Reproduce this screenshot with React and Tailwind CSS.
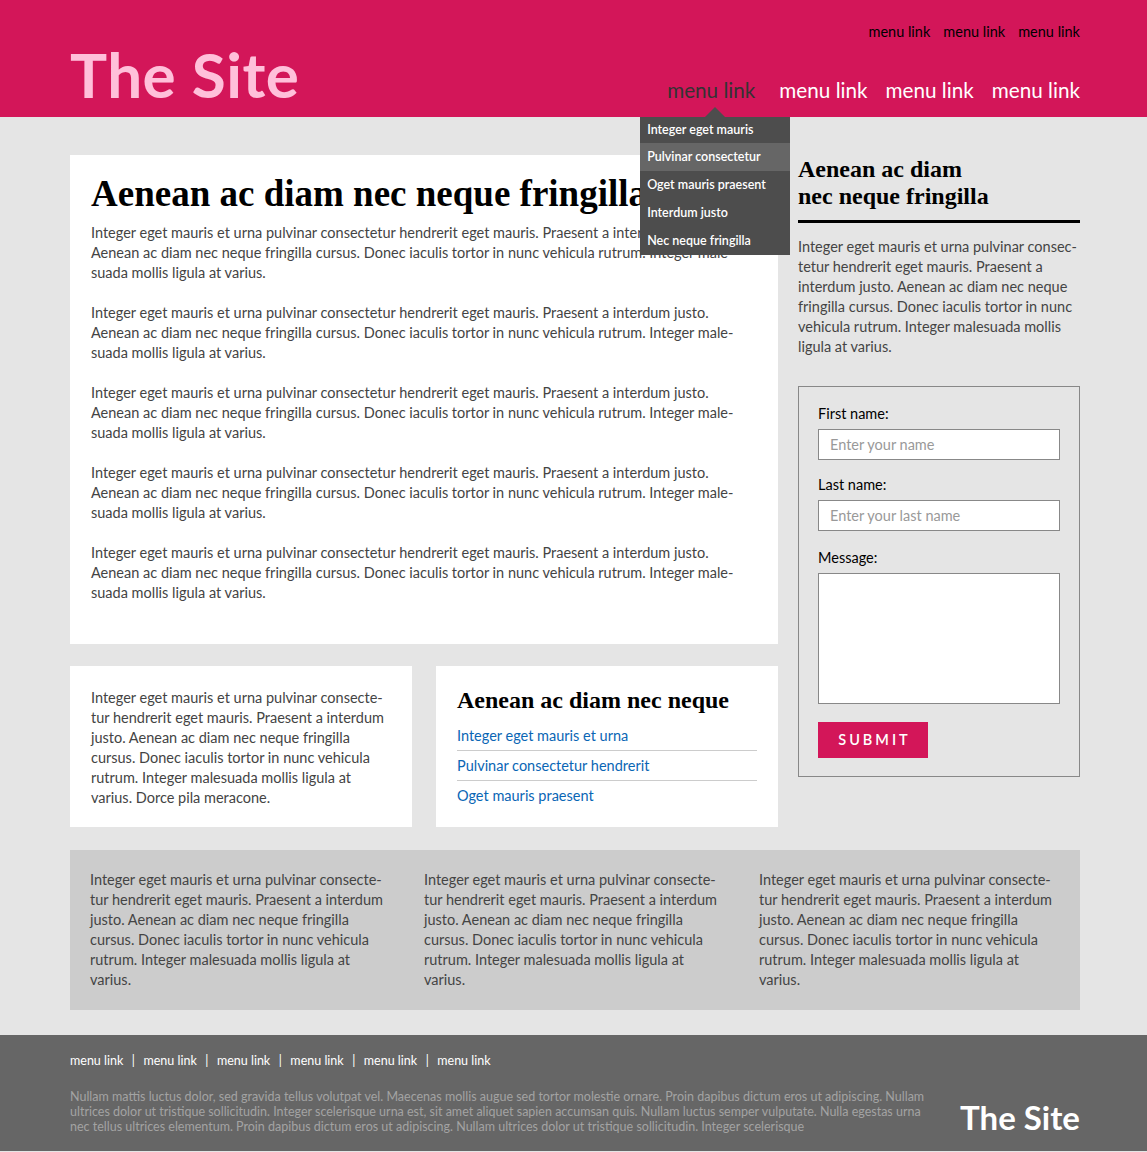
import React from 'react';

const para = [
  'Integer eget mauris et urna pulvinar consectetur hendrerit eget mauris. Praesent a interdum justo.',
  'Aenean ac diam nec neque fringilla cursus. Donec iaculis tortor in nunc vehicula rutrum. Integer male-',
  'suada mollis ligula at varius.',
];

const sidePara = [
  'Integer eget mauris et urna pulvinar consec-',
  'tetur hendrerit eget mauris. Praesent a',
  'interdum justo. Aenean ac diam nec neque',
  'fringilla cursus. Donec iaculis tortor in nunc',
  'vehicula rutrum. Integer malesuada mollis',
  'ligula at varius.',
];

const colPara = [
  'Integer eget mauris et urna pulvinar consecte-',
  'tur hendrerit eget mauris. Praesent a interdum',
  'justo. Aenean ac diam nec neque fringilla',
  'cursus. Donec iaculis tortor in nunc vehicula',
  'rutrum. Integer malesuada mollis ligula at',
];

const footerPara = [
  'Nullam mattis luctus dolor, sed gravida tellus volutpat vel. Maecenas mollis augue sed tortor molestie ornare. Proin dapibus dictum eros ut adipiscing. Nullam',
  'ultrices dolor ut tristique sollicitudin. Integer scelerisque urna est, sit amet aliquet sapien accumsan quis. Nullam luctus semper vulputate. Nulla egestas urna',
  'nec tellus ultrices elementum. Proin dapibus dictum eros ut adipiscing. Nullam ultrices dolor ut tristique sollicitudin. Integer scelerisque',
];

const dropdown = ['Integer eget mauris', 'Pulvinar consectetur', 'Oget mauris praesent', 'Interdum justo', 'Nec neque fringilla'];

// keeps the hyphenated line breaks of the original
const Lines = ({ lines, className = '' }) => (
  <p className={className}>
    {lines.map((l, i) => (
      <span key={i} className="block whitespace-nowrap">{l}</span>
    ))}
  </p>
);

export default function App() {
  return (
    <div className="min-h-screen bg-[#e5e5e5] font-['Lato','Open_Sans',sans-serif] text-[14.5px] leading-[20px] text-[#444]">
      {/* Header */}
      <header className="h-[117px] bg-[#d31659]">
        <div className="w-[1010px] ml-[70px] flex justify-between">
          <a href="#" className="mt-[43px] text-[62px] leading-none font-bold text-[#ffc0da] tracking-[0.5px]">The Site</a>
          <div className="flex flex-col items-end">
            <ul className="flex gap-[13px] pt-[22px] text-[14.5px] text-black">
              <li>menu link</li>
              <li>menu link</li>
              <li>menu link</li>
            </ul>
            <ul className="flex mt-[34px] text-[20.7px] leading-[28px] text-white">
              <li className="relative mr-[24px] text-[#333]">
                menu link
                <div className="absolute left-[-27px] top-[41px] w-[150px] z-10">
                  <div className="absolute left-1/2 -top-[10px] -translate-x-1/2 w-0 h-0 border-l-[10px] border-r-[10px] border-b-[10px] border-l-transparent border-r-transparent border-b-[#4d4d4d]" />
                  <ul className="bg-[#4d4d4d] text-[12.5px] font-semibold text-white">
                    {dropdown.map((d, i) => (
                      <li key={d} className={`px-[7px] ${i === 0 ? 'h-[26px] leading-[26px]' : 'h-[28px] leading-[28px]'} ${i === 1 ? 'bg-[#666]' : ''}`}>{d}</li>
                    ))}
                  </ul>
                </div>
              </li>
              <li className="mr-[18px]">menu link</li>
              <li className="mr-[18px]">menu link</li>
              <li>menu link</li>
            </ul>
          </div>
        </div>
      </header>

      {/* Content */}
      <main className="w-[1010px] ml-[70px] pt-[38px] flex gap-[20px]">
        <div className="w-[708px] flex flex-col gap-[22px]">
          <article className="bg-white pt-[17px] pb-[41px] px-[21px]">
            <h1 className="font-['Liberation_Serif',serif] font-bold text-[37px] leading-[43px] text-black">Aenean ac diam nec neque fringilla</h1>
            <div className="mt-[8px] flex flex-col gap-[20px]">
              {[0, 1, 2, 3, 4].map((i) => (
                <Lines key={i} lines={para} />
              ))}
            </div>
          </article>
          <div className="flex gap-[24px]">
            <div className="w-[342px] h-[161px] bg-white px-[21px] pt-[22px]">
              <Lines lines={[...colPara, 'varius. Dorce pila meracone.']} />
            </div>
            <div className="w-[342px] h-[161px] bg-white px-[21px] pt-[21px]">
              <h3 className="font-['Liberation_Serif',serif] font-bold text-[24px] leading-[27px] text-black">Aenean ac diam nec neque</h3>
              <ul className="mt-[12px] text-[#0a66b5]">
                <li className="pb-[4px] border-b border-[#ccc]"><a href="#">Integer eget mauris et urna</a></li>
                <li className="pt-[5px] pb-[4px] border-b border-[#ccc]"><a href="#">Pulvinar consectetur hendrerit</a></li>
                <li className="pt-[5px]"><a href="#">Oget mauris praesent</a></li>
              </ul>
            </div>
          </div>
        </div>

        <aside className="w-[282px]">
          <h2 className="mt-[1px] pb-[10px] border-b-[3px] border-black font-['Liberation_Serif',serif] font-bold text-[24px] leading-[27px] text-black">
            Aenean ac diam<br />nec neque fringilla
          </h2>
          <Lines lines={sidePara} className="mt-[14px]" />
          <form className="mt-[29px] border border-[#888] px-[19px] pt-[17px] pb-[18px] text-black">
            <label className="block">First name:</label>
            <input type="text" placeholder="Enter your name" className="mt-[5px] block w-full h-[31px] bg-white border border-[#888] px-[11px] text-[14.5px] placeholder:text-[#999] outline-none" />
            <label className="block mt-[15px]">Last name:</label>
            <input type="text" placeholder="Enter your last name" className="mt-[5px] block w-full h-[31px] bg-white border border-[#888] px-[11px] text-[14.5px] placeholder:text-[#999] outline-none" />
            <label className="block mt-[17px]">Message:</label>
            <textarea className="mt-[5px] block w-full h-[131px] bg-white border border-[#888] resize-none outline-none" />
            <button type="button" className="mt-[18px] w-[110px] h-[36px] bg-[#d31659] text-white text-[14.5px] font-semibold tracking-[3px] pl-[3px]">SUBMIT</button>
          </form>
        </aside>
      </main>

      {/* Gray columns */}
      <section className="w-[1010px] ml-[70px] mt-[23px] bg-[#ccc] py-[20px] pl-[20px] grid grid-cols-[334px_335px_1fr]">
        {[0, 1, 2].map((i) => (
          <Lines key={i} lines={[...colPara, 'varius.']} />
        ))}
      </section>

      {/* Footer */}
      <footer className="mt-[25px] bg-[#666] pt-[18px] pb-[17px]">
        <div className="w-[1010px] ml-[70px]">
          <ul className="flex text-[12.5px] leading-[15px] text-white">
            {[0, 1, 2, 3, 4, 5].map((i) => (
              <li key={i} className="flex">
                {i > 0 && <span className="px-[8.5px]">|</span>}
                <a href="#">menu link</a>
              </li>
            ))}
          </ul>
          <div className="mt-[21px] flex justify-between items-end">
            <Lines lines={footerPara} className="text-[12.5px] leading-[15px] text-[#a3a3a3]" />
            <span className="text-[33px] leading-none font-bold text-white">The Site</span>
          </div>
        </div>
      </footer>
    </div>
  );
}
